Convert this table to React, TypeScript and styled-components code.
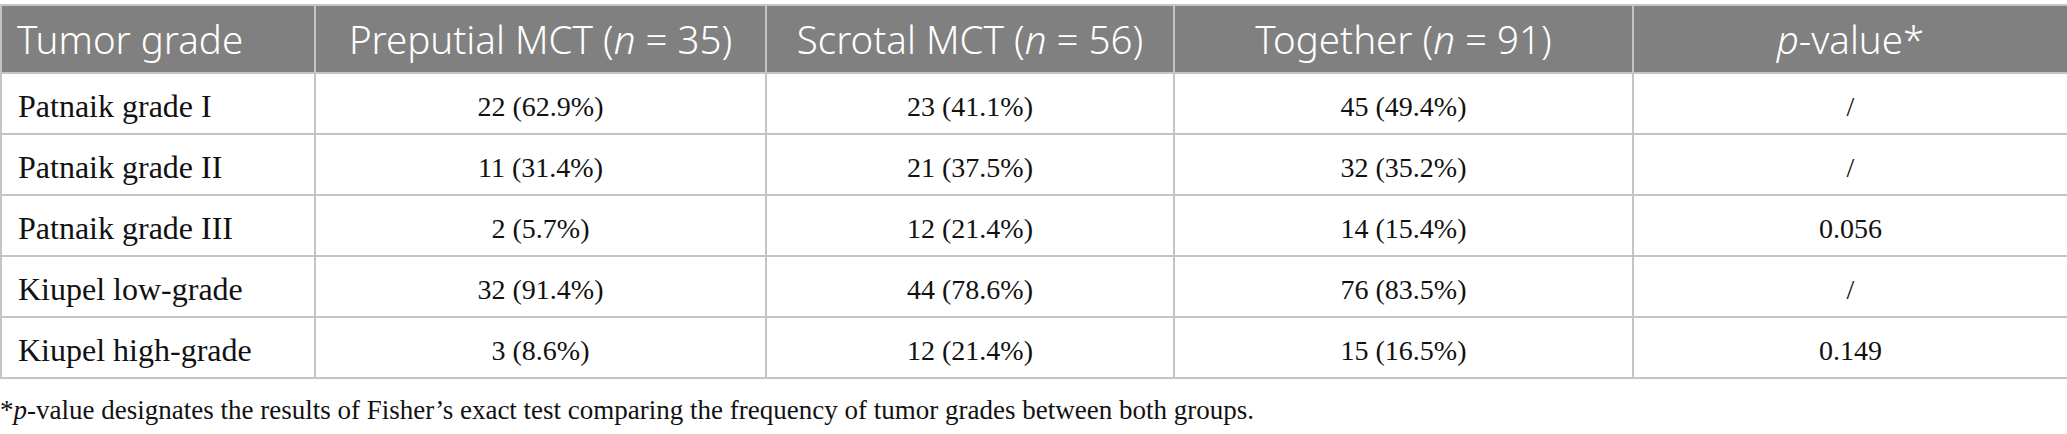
import styled, { createGlobalStyle } from 'styled-components';

// Global page reset
const GlobalStyle = createGlobalStyle`
    html, body {
        margin: 0;
        padding: 0;
        background: #ffffff;
    }
`

const Wrapper = styled.div`
    width: 2067px;
    padding-top: 4px;
`
const Table = styled.table`
    width: 2067px;
    border-collapse: collapse;
    table-layout: fixed;
`
const HeadCell = styled.th<{ $align?: string }>`
    height: 68px;
    padding: 0 15px;
    background-color: #808080;
    color: #ffffff;
    font-family: 'Noto Sans', 'Open Sans', sans-serif;
    font-weight: 300;
    font-size: 38.5px;
    text-align: ${props => props.$align || 'center'};
    border: 2px solid #c4c4c4;
    box-sizing: border-box;
    white-space: nowrap;
`
const Cell = styled.td<{ $label?: boolean }>`
    height: 61px;
    padding: 6px 16px 0 16px;
    color: #111111;
    font-family: 'Liberation Serif', 'Times New Roman', serif;
    font-size: ${props => props.$label ? '32px' : '28px'};
    text-align: ${props => props.$label ? 'left' : 'center'};
    border: 2px solid #c4c4c4;
    box-sizing: border-box;
    white-space: nowrap;
`
const Footnote = styled.p`
    margin: 16px 0 0 0;
    font-family: 'Liberation Serif', 'Times New Roman', serif;
    font-size: 27px;
    color: #111111;
`

const columns = [314, 451, 408, 459, 435];

const rows = [
    ['Patnaik grade I', '22 (62.9%)', '23 (41.1%)', '45 (49.4%)', '/'],
    ['Patnaik grade II', '11 (31.4%)', '21 (37.5%)', '32 (35.2%)', '/'],
    ['Patnaik grade III', '2 (5.7%)', '12 (21.4%)', '14 (15.4%)', '0.056'],
    ['Kiupel low-grade', '32 (91.4%)', '44 (78.6%)', '76 (83.5%)', '/'],
    ['Kiupel high-grade', '3 (8.6%)', '12 (21.4%)', '15 (16.5%)', '0.149'],
];

const App = () => {
    return (
        <>
            <GlobalStyle />
            <Wrapper>
                <Table>
                    <colgroup>
                        {columns.map((w, i) => <col key={i} width={w} />)}
                    </colgroup>
                    <thead>
                        <tr>
                            <HeadCell $align="left">Tumor grade</HeadCell>
                            <HeadCell>Preputial MCT (<i>n</i> = 35)</HeadCell>
                            <HeadCell>Scrotal MCT (<i>n</i> = 56)</HeadCell>
                            <HeadCell>Together (<i>n</i> = 91)</HeadCell>
                            <HeadCell><i>p</i>-value*</HeadCell>
                        </tr>
                    </thead>
                    <tbody>
                        {rows.map((row, r) => (
                            <tr key={r}>
                                {row.map((value, c) => (
                                    <Cell key={c} $label={c === 0}>{value}</Cell>
                                ))}
                            </tr>
                        ))}
                    </tbody>
                </Table>
                <Footnote>
                    *<i>p</i>-value designates the results of Fisher’s exact test comparing the frequency of tumor grades between both groups.
                </Footnote>
            </Wrapper>
        </>
    );
};

export default App;
